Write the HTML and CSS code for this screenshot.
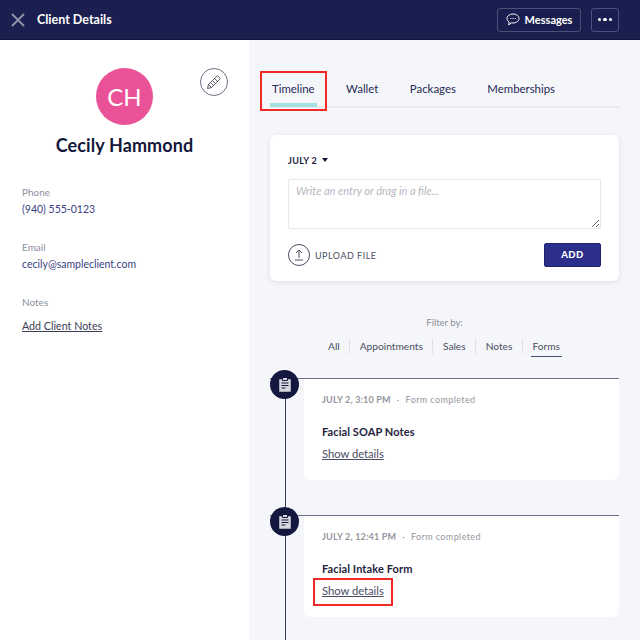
FILE: index.html
```html
<!DOCTYPE html>
<html lang="en">

<head>
    <meta charset="UTF-8">
    <title>Client Details</title>
    <link rel="stylesheet" href="styles.css">
</head>

<body>
    <header class="topbar">
        <svg class="close-icon" width="14" height="14" viewBox="0 0 14 14"><path d="M1 1l12 12M13 1L1 13"/></svg>
        <h1 class="topbar-title">Client Details</h1>
        <button class="btn-dark btn-messages">
            <svg width="14" height="13" viewBox="0 0 14 13"><path d="M7 1c3.200 0 6 1.900 6 4.500S10.200 10 7 10c-.6 0-1.200-.1-1.700-.2L2.800 12l.3-3C1.800 8.100 1 6.900 1 5.500 1 2.900 3.800 1 7 1z"/><path class="dots" d="M4.300 5.500h1M6.500 5.500h1M8.700 5.500h1"/></svg>
            Messages
        </button>
        <button class="btn-dark btn-more" aria-label="More"><i></i><i></i><i></i></button>
    </header>

    <div class="layout">
        <aside class="sidebar">
            <div class="profile">
                <div class="avatar">CH</div>
                <button class="edit-btn" aria-label="Edit">
                    <svg width="16" height="16" viewBox="0 0 16 16"><path d="M1.500 14.500l1-4L10.800 2.200a1 1 0 0 1 1.400 0l1.600 1.600a1 1 0 0 1 0 1.400L5.500 13.500z"/><path d="M2.500 10.500l3 3M4.500 8.500l3 3M6.500 6.500l3 3M8.500 4.500l3 3"/></svg>
                </button>
                <h2 class="client-name">Cecily Hammond</h2>
            </div>
            <div class="field">
                <div class="field-label">Phone</div>
                <div class="field-value">(940) 555-0123</div>
            </div>
            <div class="field">
                <div class="field-label">Email</div>
                <div class="field-value">cecily@sampleclient.com</div>
            </div>
            <div class="field">
                <div class="field-label">Notes</div>
                <a class="notes-link" href="#">Add Client Notes</a>
            </div>
        </aside>

        <main class="content">
            <nav class="tabs">
                <a class="tab active" href="#">Timeline<span class="callout callout-tab"></span></a>
                <a class="tab" href="#">Wallet</a>
                <a class="tab" href="#">Packages</a>
                <a class="tab" href="#">Memberships</a>
            </nav>

            <section class="entry-form">
                <div class="date-picker">JULY 2 <span class="caret"></span></div>
                <textarea class="entry-input" placeholder="Write an entry or drag in a file..."></textarea>
                <div class="form-actions">
                    <div class="upload">
                        <svg width="22" height="22" viewBox="0 0 22 22"><circle cx="11" cy="11" r="10.500"/><path d="M11 14V6.500M8 9l3-3 3 3M7 16h8"/></svg>
                        UPLOAD FILE
                    </div>
                    <button class="btn-add">ADD</button>
                </div>
            </section>

            <div class="filter">
                <div class="filter-label">Filter by:</div>
                <div class="filter-list">
                    <span class="filter-item">All</span>
                    <span class="filter-item">Appointments</span>
                    <span class="filter-item">Sales</span>
                    <span class="filter-item">Notes</span>
                    <span class="filter-item current">Forms</span>
                </div>
            </div>

            <div class="timeline">
                <article class="entry">
                    <div class="entry-badge">
                        <svg width="14" height="17" viewBox="0 0 14 17"><path class="clip-body" d="M1 3h12v13H1z"/><path class="clip-top" d="M4.500 1.500h5v3h-5z"/><path class="clip-lines" d="M3.500 7h7M3.500 9.500h7M3.500 12h4"/></svg>
                    </div>
                    <div class="entry-card">
                        <div class="entry-meta"><b>JULY 2, 3:10 PM</b><span class="sep">·</span>Form completed</div>
                        <h3 class="entry-title">Facial SOAP Notes</h3>
                        <a class="details-link" href="#">Show details</a>
                    </div>
                </article>
                <article class="entry">
                    <div class="entry-badge">
                        <svg width="14" height="17" viewBox="0 0 14 17"><path class="clip-body" d="M1 3h12v13H1z"/><path class="clip-top" d="M4.500 1.500h5v3h-5z"/><path class="clip-lines" d="M3.500 7h7M3.500 9.500h7M3.500 12h4"/></svg>
                    </div>
                    <div class="entry-card">
                        <div class="entry-meta"><b>JULY 2, 12:41 PM</b><span class="sep">·</span>Form completed</div>
                        <h3 class="entry-title">Facial Intake Form</h3>
                        <a class="details-link" href="#">Show details<span class="callout callout-link"></span></a>
                    </div>
                </article>
            </div>
        </main>
    </div>
</body>

</html>
```

FILE: styles.css
```css
* {
    box-sizing: border-box;
}

html,
body {
    height: 640px;
    overflow: hidden;
}

body {
    margin: 0;
    font-family: Lato, "Open Sans", sans-serif;
    color: #1a1f4b;
    background-color: #f5f6f9;
}

.topbar {
    display: flex;
    align-items: center;
    height: 40px;
    padding: 0 21px 0 11px;
    background-color: #1a1f4f;
    border-bottom: 1px solid #12163a;
}

.close-icon {
    fill: none;
    stroke: #8c90a8;
    stroke-width: 2;
}

.topbar-title {
    flex: 1;
    margin: 0 0 0 12px;
    font-size: 12.500px;
    font-weight: 700;
    color: #fff;
}

.btn-dark {
    display: flex;
    align-items: center;
    justify-content: center;
    height: 24px;
    background: none;
    border: 1px solid #4c5078;
    border-radius: 3px;
    color: #fff;
    font-family: inherit;
    font-size: 11px;
    font-weight: 700;
}

.btn-messages {
    gap: 5px;
    width: 84px;
    padding: 0;
}

.btn-messages svg {
    fill: none;
    stroke: #fff;
    stroke-width: 1;
}

.btn-messages .dots {
    stroke-width: 1.200;
}

.btn-more {
    gap: 2px;
    width: 28px;
    margin-left: 10px;
    padding: 0;
}

.btn-more i {
    width: 3.500px;
    height: 3.500px;
    border-radius: 50%;
    background: #fff;
}

.layout {
    display: flex;
    height: 600px;
    overflow: hidden;
}

.sidebar {
    width: 249px;
    padding: 28px 22px 0;
    background-color: #fff;
}

.profile {
    position: relative;
    display: flex;
    flex-direction: column;
    align-items: center;
    margin-bottom: 28px;
}

.avatar {
    display: flex;
    align-items: center;
    justify-content: center;
    width: 57px;
    height: 57px;
    border-radius: 50%;
    background-color: #ea5297;
    color: #fff;
    font-size: 24px;
}

.edit-btn {
    position: absolute;
    top: 0;
    right: -1px;
    display: flex;
    align-items: center;
    justify-content: center;
    width: 28px;
    height: 28px;
    padding: 0;
    background: #fff;
    border: 1px solid #6c6f80;
    border-radius: 50%;
}

.edit-btn svg {
    fill: none;
    stroke: #555869;
    stroke-width: 1;
}

.client-name {
    margin: 8px 0 0;
    font-size: 18px;
    line-height: 24px;
    font-weight: 700;
    letter-spacing: 0.1px;
    color: #14183a;
}

.field {
    height: 55px;
}

.field-label {
    font-size: 10px;
    line-height: 14px;
    color: #8d8f9e;
}

.field-value {
    margin-top: 3px;
    font-size: 10.500px;
    line-height: 14px;
    color: #3a3f85;
}

.notes-link {
    display: inline-block;
    margin-top: 10px;
    font-size: 10.700px;
    line-height: 14px;
    color: #3b3e55;
}

.content {
    flex: 1;
    padding: 29px 21px 0;
}

.tabs {
    display: flex;
    gap: 27.500px;
    height: 39px;
    border-bottom: 2px solid #eaebf1;
}

.tab {
    position: relative;
    height: 38px;
    padding: 12px 2px 0;
    font-size: 11.400px;
    line-height: 15px;
    color: #262a55;
    text-decoration: none;
}

.tab.active {
    border-bottom: 4px solid #a4dfe2;
}

.callout {
    position: absolute;
    border: 2px solid #ee2a24;
}

.callout-tab {
    top: 2px;
    left: -10px;
    width: 67px;
    height: 40px;
}

.entry-form {
    height: 146px;
    margin-top: 27px;
    padding: 18px 18px 0;
    background-color: #fff;
    border-radius: 6px;
    box-shadow: 0 1px 5px rgba(30, 35, 80, 0.1);
}

.date-picker {
    display: flex;
    align-items: center;
    gap: 5px;
    height: 14px;
    font-size: 9px;
    letter-spacing: 0.3px;
    font-weight: 700;
    color: #1f2340;
}

.caret {
    border-top: 4px solid #14183a;
    border-left: 3.500px solid transparent;
    border-right: 3.500px solid transparent;
}

.entry-input {
    display: block;
    width: 100%;
    height: 50px;
    margin-top: 12px;
    padding: 4px 7px;
    border: 1px solid #e6e7ec;
    border-radius: 2px;
    font-family: inherit;
    font-size: 11px;
    font-style: italic;
}

.entry-input::placeholder {
    color: #b6b7c1;
}

.form-actions {
    display: flex;
    align-items: center;
    justify-content: space-between;
    margin-top: 14px;
}

.upload {
    display: flex;
    align-items: center;
    gap: 5px;
    font-size: 9px;
    letter-spacing: 0.5px;
    color: #4a4d63;
}

.upload svg {
    fill: none;
    stroke: #4a4d63;
    stroke-width: 1;
}

.btn-add {
    width: 57px;
    height: 24px;
    padding: 0 0 2px;
    background-color: #2b2f8a;
    border: 1px solid #1f2370;
    border-radius: 2px;
    color: #fff;
    font-family: inherit;
    font-size: 9.500px;
    font-weight: 900;
    letter-spacing: 0.5px;
}

.filter {
    margin-top: 35px;
    text-align: center;
}

.filter-label {
    font-size: 9.500px;
    line-height: 14px;
    color: #8d8f9e;
}

.filter-list {
    display: flex;
    justify-content: center;
    gap: 9.500px;
    margin-top: 9px;
    padding-right: 1px;
}

.filter-item {
    position: relative;
    height: 15px;
    font-size: 10.200px;
    line-height: 14px;
    color: #4a4d63;
}

.filter-item + .filter-item {
    padding-left: 9.500px;
    border-left: 1px solid #e1e2e8;
}

.filter-item.current::after {
    content: "";
    position: absolute;
    left: 8px;
    right: -2px;
    bottom: -3px;
    height: 1.500px;
    background: #4a4d6e;
}

.timeline {
    position: relative;
    margin-top: 24px;
}

.timeline::before {
    content: "";
    position: absolute;
    top: 8px;
    bottom: -23px;
    left: 14.500px;
    width: 1.500px;
    background: #3c3f62;
}

.entry {
    position: relative;
    display: flex;
    justify-content: flex-end;
    margin-bottom: 35px;
    border-top: 1px solid #6d6f88;
}

.entry:last-child {
    margin-bottom: 0;
}

.entry-badge {
    position: absolute;
    top: -9px;
    left: 0;
    display: flex;
    align-items: center;
    justify-content: center;
    width: 29px;
    height: 29px;
    border-radius: 50%;
    background-color: #14183f;
}

.clip-body {
    fill: #d8d9de;
    stroke: #14183f;
    stroke-width: 0.500;
}

.clip-top {
    fill: #d8d9de;
    stroke: #14183f;
    stroke-width: 1;
}

.clip-lines {
    fill: none;
    stroke: #14183f;
    stroke-width: 1;
}

.entry-card {
    width: 315px;
    height: 101px;
    padding: 14px 18px 0;
    background-color: #fff;
    border-radius: 0 0 6px 6px;
}

.entry-meta {
    font-size: 9px;
    line-height: 14px;
    letter-spacing: 0.4px;
    color: #94959f;
}

.entry-meta b {
    font-weight: 700;
    letter-spacing: 0.2px;
}

.sep {
    margin: 0 6px;
}

.entry-title {
    margin: 18px 0 0;
    font-size: 11px;
    line-height: 14px;
    font-weight: 700;
    letter-spacing: 0.1px;
    color: #1f2340;
}

.details-link {
    position: relative;
    display: inline-block;
    margin-top: 8px;
    font-size: 11.200px;
    line-height: 14px;
    color: #4a4d63;
}

.callout-link {
    top: -6px;
    left: -9px;
    width: 80px;
    height: 28px;
}
```
